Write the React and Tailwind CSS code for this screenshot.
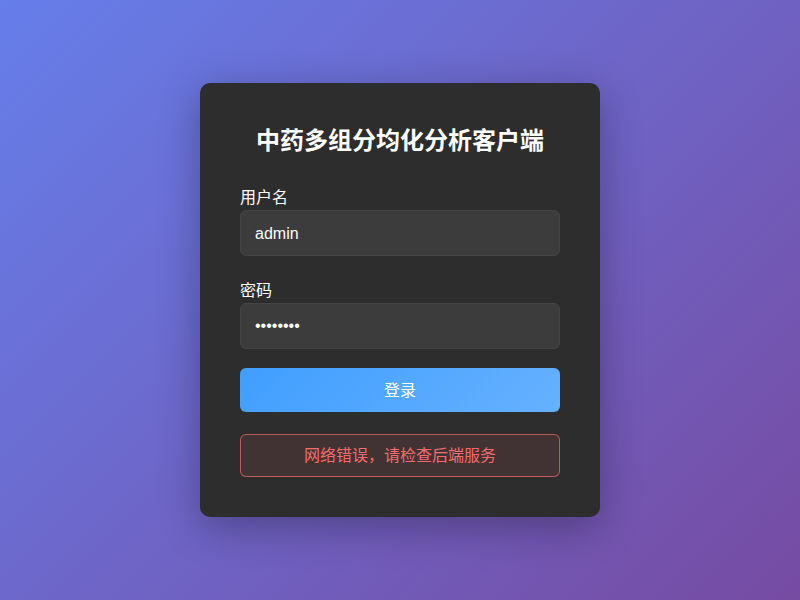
export default function App() {
  return (
    <div
      className="min-h-screen w-full flex items-center justify-center bg-[linear-gradient(135deg,#667eea_0%,#764ba2_100%)]"
      style={{ fontFamily: '"Liberation Sans", "Noto Sans CJK SC", sans-serif' }}
    >
      <div className="w-[400px] bg-[#2d2d2d] rounded-[10px] px-10 pt-10 pb-10 shadow-[0_10px_40px_rgba(0,0,0,0.3)]">
        <h1 className="text-center text-white text-2xl font-bold leading-9 mb-[25px]">
          中药多组分均化分析客户端
        </h1>

        <div className="mb-[21px]">
          <label className="block text-white text-base leading-6 pt-[2px] mb-0">用户名</label>
          <input
            type="text"
            readOnly
            value="admin"
            className="w-full h-[46px] px-[14px] pt-[2px] rounded-[6px] bg-[#3c3c3c] border border-[#444444] text-white text-base outline-none"
          />
        </div>

        <div className="mb-[19px]">
          <label className="block text-white text-base leading-6 pt-[2px] mb-0">密码</label>
          <input
            type="password"
            readOnly
            value="12345678"
            className="w-full h-[46px] px-[14px] rounded-[6px] bg-[#3c3c3c] border border-[#444444] text-white text-base outline-none"
          />
        </div>

        <button className="w-full h-[44px] pt-[2px] rounded-[6px] bg-[linear-gradient(135deg,#409eff_0%,#66b1ff_100%)] text-white text-base">
          登录
        </button>

        <div className="mt-[22px] h-[43px] pt-[1px] flex items-center justify-center rounded-[6px] border border-[#f56c6c]/70 bg-[#f56c6c]/10 text-[#f56c6c] text-base">
          网络错误，请检查后端服务
        </div>
      </div>
    </div>
  )
}
